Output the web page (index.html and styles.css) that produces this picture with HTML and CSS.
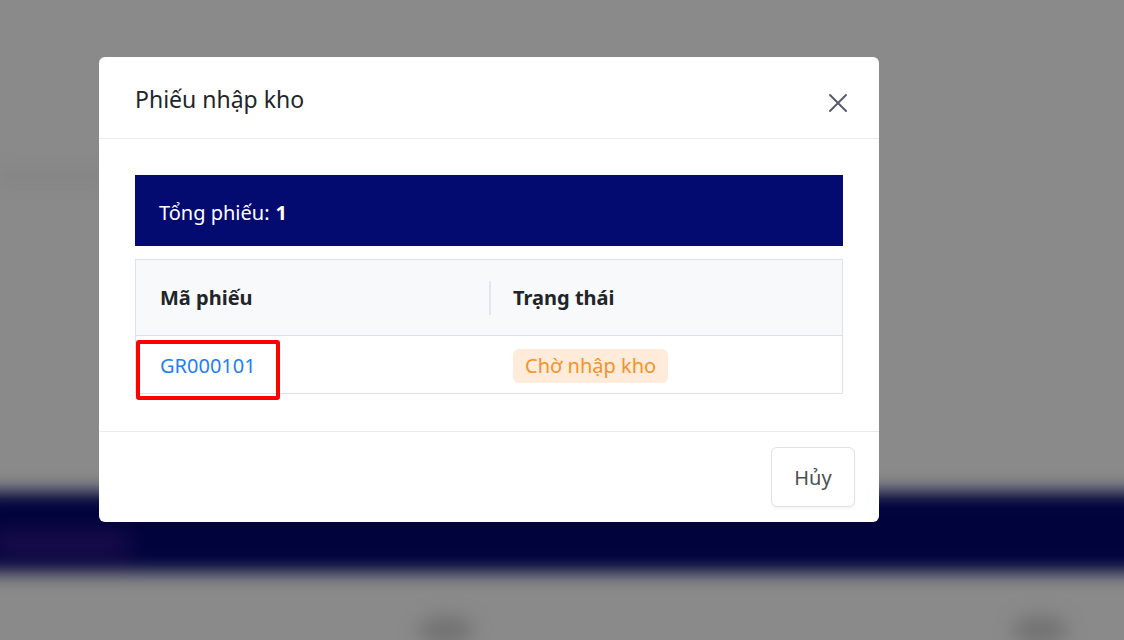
FILE: index.html
```html
<!DOCTYPE html>
<html lang="vi">
<head>
    <meta charset="UTF-8">
    <meta name="viewport" content="width=device-width, initial-scale=1.0">
    <title>Phiếu nhập kho</title>
    <link rel="stylesheet" href="styles.css">
</head>
<body>
    <div class="backdrop">
        <div class="backdrop-line"></div>
        <div class="backdrop-band">
            <div class="backdrop-tag"></div>
        </div>
        <div class="backdrop-row">
            <div class="backdrop-dot"></div>
            <div class="backdrop-dot"></div>
        </div>
    </div>

    <div class="overlay">
        <div class="modal">
            <div class="modal-header">
                <h5 class="modal-title">Phiếu nhập kho</h5>
                <button class="btn-close" aria-label="Close">
                    <svg width="20" height="20" viewBox="0 0 20 20">
                        <path d="M2 2 L18 18 M18 2 L2 18" stroke="#555d6b" stroke-width="2" stroke-linecap="round" fill="none"/>
                    </svg>
                </button>
            </div>
            <div class="modal-body">
                <div class="summary">Tổng phiếu: <strong>1</strong></div>
                <table class="receipt-table">
                    <thead>
                        <tr>
                            <th>Mã phiếu</th>
                            <th><span class="col-sep"></span>Trạng thái</th>
                        </tr>
                    </thead>
                    <tbody>
                        <tr>
                            <td class="code-cell">
                                <a href="#" class="code-link">GR000101</a>
                                <span class="highlight"></span>
                            </td>
                            <td><span class="badge-pending">Chờ nhập kho</span></td>
                        </tr>
                    </tbody>
                </table>
            </div>
            <div class="modal-footer">
                <button class="btn-cancel">Hủy</button>
            </div>
        </div>
    </div>
</body>
</html>
```

FILE: styles.css
```css
* {
    box-sizing: border-box;
}

html, body {
    height: 100%;
}

body {
    margin: 0;
    font-family: "Noto Sans", "Open Sans", Arial, sans-serif;
    color: #212529;
    background-color: #8a8a8a;
    overflow: hidden;
}

/* blurred page behind the modal */
.backdrop {
    height: 100%;
    background-color: #8a8a8a;
    overflow: hidden;
}

.backdrop-line {
    margin-top: 168px;
    width: 110px;
    height: 18px;
    background-color: #858585;
    filter: blur(7px);
}

.backdrop-band {
    margin: 306px -40px 0 -40px;
    height: 80px;
    background-color: #00033c;
    filter: blur(9px);
    padding: 42px 0 0 30px;
}

.backdrop-tag {
    width: 140px;
    height: 20px;
    background-color: #22104f;
    filter: blur(9px);
}

.backdrop-row {
    display: flex;
    padding-left: 418px;
    gap: 538px;
    margin-top: 44px;
}

.backdrop-dot {
    width: 56px;
    height: 28px;
    border-radius: 50%;
    background-color: #727272;
    filter: blur(9px);
}

.overlay {
    position: fixed;
    inset: 0;
    padding: 57px 0 0 99px;
}

.modal {
    width: 780px;
    background-color: #fff;
    border-radius: 6px;
}

.modal-header {
    display: flex;
    align-items: center;
    justify-content: space-between;
    height: 82px;
    padding: 0 31px 0 36px;
    border-bottom: 1px solid #e9ecef;
}

.modal-title {
    margin: 0;
    font-size: 23px;
    font-weight: 400;
    color: #212529;
    padding-top: 2px;
}

.btn-close {
    background: none;
    border: none;
    padding: 0;
    margin-top: 10px;
    width: 20px;
    height: 20px;
    cursor: pointer;
}

.modal-body {
    padding: 36px 36px 37px 36px;
    border-bottom: 1px solid #e9ecef;
}

.summary {
    height: 71px;
    display: flex;
    align-items: center;
    gap: 6px;
    padding: 3px 0 0 24px;
    background-color: #030b70;
    color: #fff;
    font-size: 20px;
}

.summary strong {
    font-weight: 700;
}

.receipt-table {
    width: 100%;
    margin-top: 13px;
    border-collapse: collapse;
    border: 1px solid #dee2e6;
    table-layout: fixed;
    font-size: 20px;
}

.receipt-table th {
    position: relative;
    height: 76px;
    padding: 0 24px;
    background-color: #f8f9fa;
    text-align: left;
    font-weight: 700;
    color: #212529;
    border-bottom: 1px solid #dee2e6;
}

.col-sep {
    position: absolute;
    left: 0;
    top: 21px;
    height: 34px;
    width: 2px;
    background-color: #e3e6ea;
}

.receipt-table td {
    height: 58px;
    padding: 2px 24px 0;
    vertical-align: middle;
}

.code-cell {
    position: relative;
}

.code-link {
    color: #1f7ef2;
    text-decoration: none;
}

.highlight {
    position: absolute;
    left: 0;
    top: 4px;
    width: 144px;
    height: 60px;
    border: 4px solid #ff0000;
    border-radius: 3px;
}

.badge-pending {
    display: inline-block;
    padding: 3px 12px 4px;
    border-radius: 6px;
    background-color: #feebda;
    color: #f5922b;
}

.modal-footer {
    display: flex;
    justify-content: flex-end;
    padding: 15px 24px;
}

.btn-cancel {
    width: 84px;
    height: 60px;
    font-family: inherit;
    font-size: 20px;
    color: #495057;
    background-color: #fff;
    border: 1px solid #dfe1ea;
    border-radius: 6px;
    box-shadow: 0 2px 3px rgba(0, 0, 0, 0.04);
    cursor: pointer;
}
```
